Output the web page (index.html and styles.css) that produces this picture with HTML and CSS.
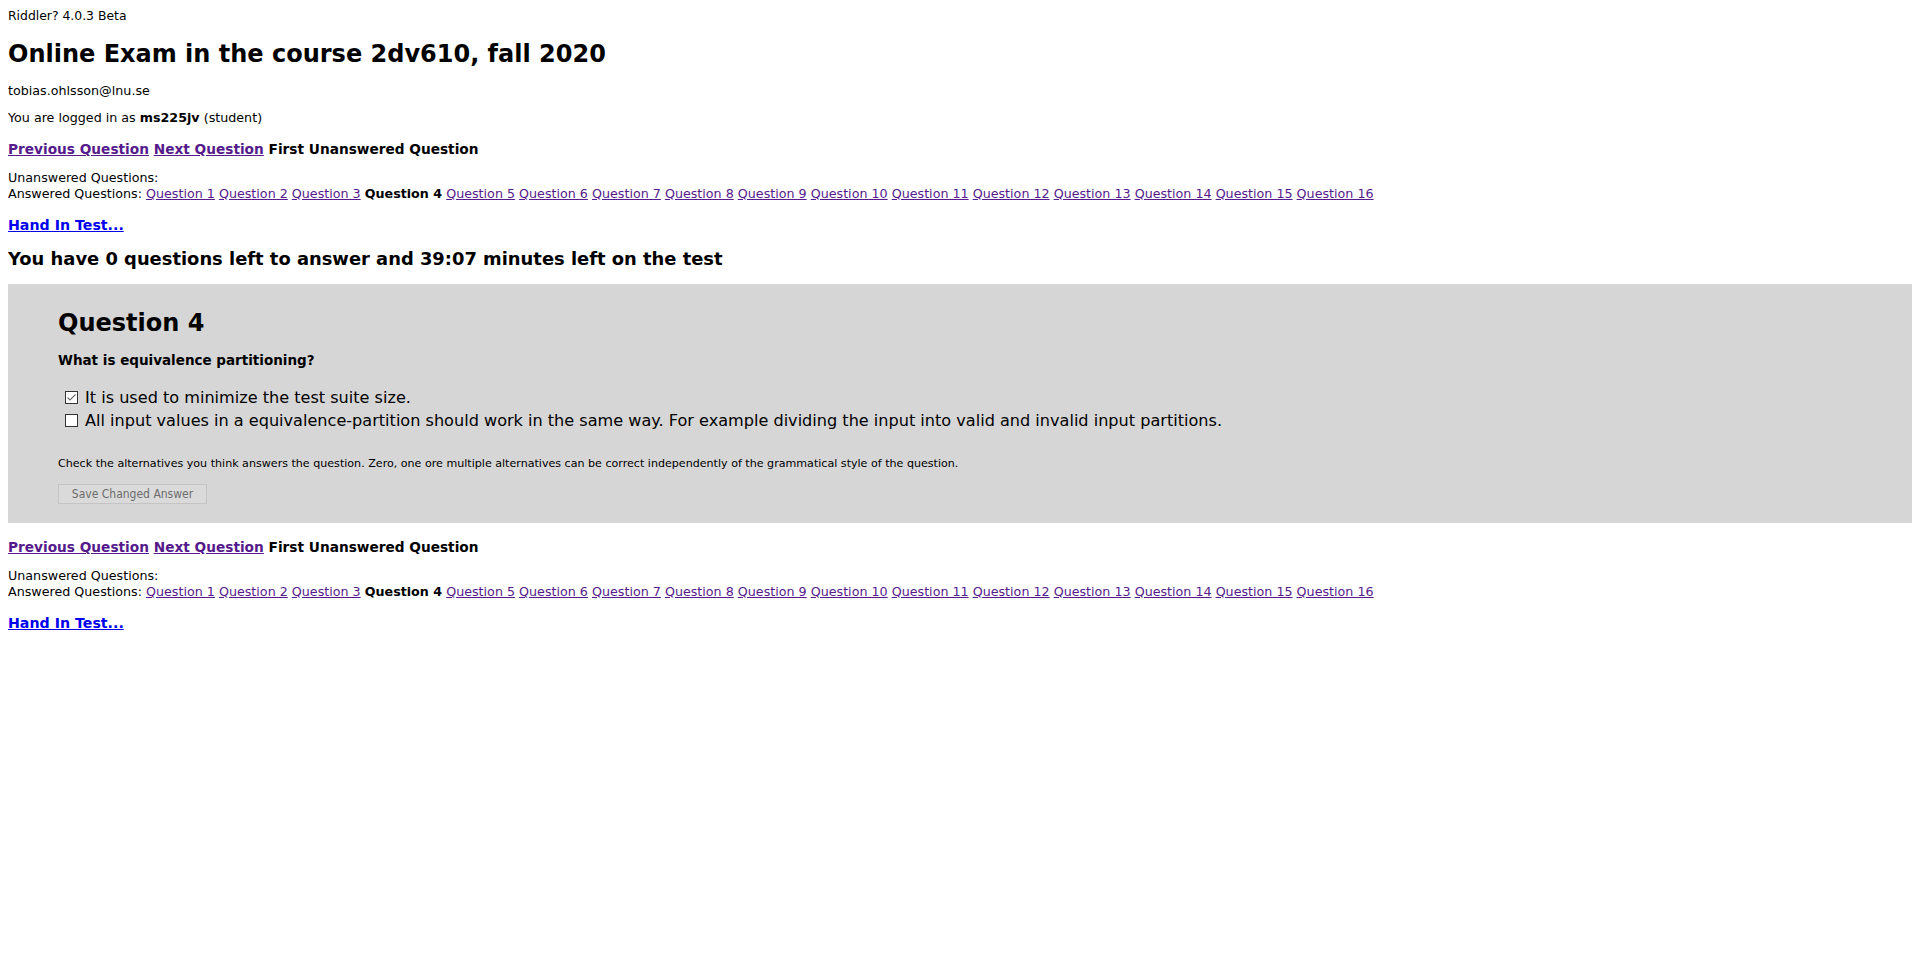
FILE: index.html
```html
<!DOCTYPE html>
<html>
<head>
<meta charset="utf-8">
<title>Riddler? 4.0.3 Beta</title>
<link rel="stylesheet" href="styles.css">
</head>
<body>
<div class="version">Riddler? 4.0.3 Beta</div>
<h1 class="title">Online Exam in the course 2dv610, fall 2020</h1>
<p class="email">tobias.ohlsson@lnu.se</p>
<p class="login">You are logged in as <b>ms225jv</b> (student)</p>

<div class="nav"><a href="#" class="visited">Previous Question</a> <a href="#" class="visited">Next Question</a> First Unanswered Question</div>
<div class="lists">
  <div>Unanswered Questions:</div>
  <div>Answered Questions: <a href="#" class="visited">Question 1</a> <a href="#" class="visited">Question 2</a> <a href="#" class="visited">Question 3</a> <b>Question 4</b> <a href="#" class="visited">Question 5</a> <a href="#" class="visited">Question 6</a> <a href="#" class="visited">Question 7</a> <a href="#" class="visited">Question 8</a> <a href="#" class="visited">Question 9</a> <a href="#" class="visited">Question 10</a> <a href="#" class="visited">Question 11</a> <a href="#" class="visited">Question 12</a> <a href="#" class="visited">Question 13</a> <a href="#" class="visited">Question 14</a> <a href="#" class="visited">Question 15</a> <a href="#" class="visited">Question 16</a></div>
</div>
<div class="handin"><a href="#">Hand In Test...</a></div>

<h3 class="status">You have 0 questions left to answer and 39:07 minutes left on the test</h3>

<div class="question">
  <h2 class="qtitle">Question 4</h2>
  <p class="qtext">What is equivalence partitioning?</p>
  <div class="options">
    <label class="option"><span class="cb"><svg width="11" height="11" viewBox="0 0 11 11"><path d="M1.5 5.5 L4 8 L9.5 2.5" fill="none" stroke="#6a6a6a" stroke-width="1.1"/></svg></span><span>It is used to minimize the test suite size.</span></label>
    <label class="option"><span class="cb"></span><span>All input values in a equivalence-partition should work in the same way. For example dividing the input into valid and invalid input partitions.</span></label>
  </div>
  <p class="hint">Check the alternatives you think answers the question. Zero, one ore multiple alternatives can be correct independently of the grammatical style of the question.</p>
  <button class="save" disabled>Save Changed Answer</button>
</div>

<div class="nav nav-bottom"><a href="#" class="visited">Previous Question</a> <a href="#" class="visited">Next Question</a> First Unanswered Question</div>
<div class="lists">
  <div>Unanswered Questions:</div>
  <div>Answered Questions: <a href="#" class="visited">Question 1</a> <a href="#" class="visited">Question 2</a> <a href="#" class="visited">Question 3</a> <b>Question 4</b> <a href="#" class="visited">Question 5</a> <a href="#" class="visited">Question 6</a> <a href="#" class="visited">Question 7</a> <a href="#" class="visited">Question 8</a> <a href="#" class="visited">Question 9</a> <a href="#" class="visited">Question 10</a> <a href="#" class="visited">Question 11</a> <a href="#" class="visited">Question 12</a> <a href="#" class="visited">Question 13</a> <a href="#" class="visited">Question 14</a> <a href="#" class="visited">Question 15</a> <a href="#" class="visited">Question 16</a></div>
</div>
<div class="handin"><a href="#">Hand In Test...</a></div>
</body>
</html>
```
FILE: styles.css
```css
body {
  margin: 8px;
  font-family: "DejaVu Sans", Verdana, sans-serif;
  font-size: 12.7px;
  color: #000;
  background: #fff;
}
a { color: #0000ee; }
a.visited { color: #551a8b; }

.version {
  font-size: 12.4px;
  line-height: 15px;
}
.title {
  font-size: 24px;
  line-height: 28px;
  margin: 17px 0 15px;
}
.email {
  line-height: 16px;
  margin: 0 0 11px;
}
.login {
  line-height: 16px;
  margin: 0;
}
.nav {
  font-size: 13.7px;
  line-height: 18px;
  font-weight: bold;
  margin-top: 14px;
}
.nav-bottom { margin-top: 15px; }
.lists {
  line-height: 16px;
  margin-top: 12px;
}
.handin {
  font-size: 14.2px;
  line-height: 18px;
  font-weight: bold;
  margin-top: 14px;
}
.status {
  font-size: 17.9px;
  line-height: 22px;
  margin: 14px 0 14px;
}
.question {
  background: #d6d6d6;
  padding: 25px 50px 19px;
}
.qtitle {
  font-size: 24px;
  line-height: 28px;
  margin: 0 0 15px;
}
.qtext {
  font-size: 13.5px;
  line-height: 17px;
  font-weight: bold;
  margin: 0 0 17px;
}
.options {
  display: flex;
  flex-direction: column;
  padding-left: 7px;
}
.option {
  display: flex;
  align-items: center;
  gap: 7px;
  height: 23px;
  font-size: 16.1px;
}
.cb {
  width: 11px;
  height: 11px;
  border: 1px solid #333;
  background: #fff;
  display: flex;
}
.hint {
  font-size: 11.1px;
  line-height: 12px;
  margin: 26px 0 14px;
}
.save {
  display: block;
  height: 20px;
  width: 149px;
  padding: 0;
  font-family: "DejaVu Sans Condensed", "DejaVu Sans", sans-serif;
  font-size: 12px;
  color: #6d6d6d;
  background: #dadada;
  border: 1px solid #c4c4c4;
}
```
